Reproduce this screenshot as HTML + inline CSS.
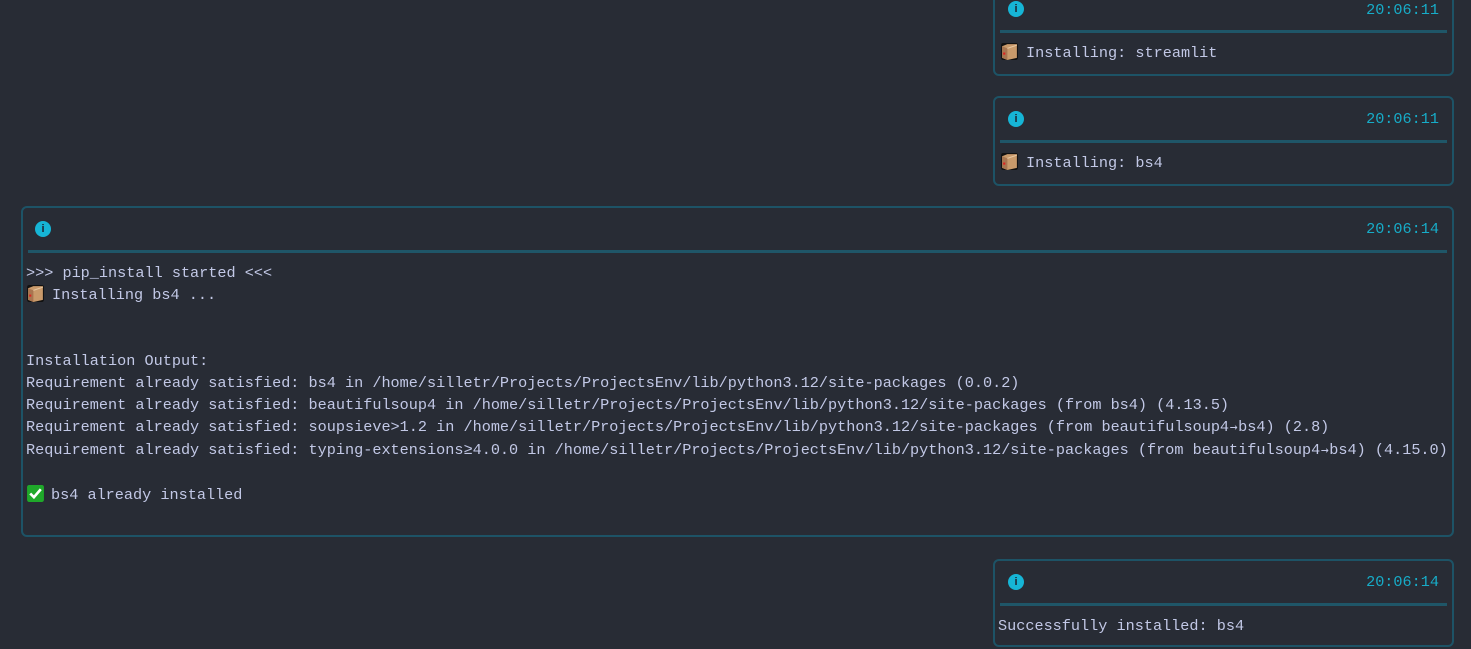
<!DOCTYPE html>
<html><head><meta charset="utf-8"><style>
body{margin:0;width:1471px;height:649px;background:#282c35;overflow:hidden;position:relative;font-family:"Liberation Mono","DejaVu Sans Mono",monospace;font-size:15.2px;color:#c2c8e6}
.card{position:absolute;border:2px solid #1d5366;border-radius:6px;box-sizing:border-box}
.ic{position:absolute;width:16px;height:16px;border-radius:50%;background:#16b5d6;color:#1c2230;font:bold 11px "Liberation Sans",sans-serif;text-align:center;line-height:16px}
.ts{position:absolute;color:#17acc8;font-size:15.2px}
.dv{position:absolute;height:3px;background:#1f5668}
.ln{position:absolute;white-space:pre;line-height:22px}
.box{display:inline-block;width:19px;height:19px;vertical-align:-4px;margin-right:7px}
.ar{display:inline-block;width:9.12px;text-align:center;font-family:"DejaVu Sans Mono",monospace;font-size:13px}
</style></head><body>
<svg width="0" height="0" style="position:absolute"><defs><symbol id="bx" viewBox="0 0 18 18"><rect x="1" y="1" width="16" height="16" rx="2" fill="#111"/><path d="M2 4 L7 2 L16 2 L16 15 L7 17 L2 15Z" fill="#c99a6b"/><path d="M2 4 L7 6 L7 17 L2 15Z" fill="#a87550"/><path d="M7 6 L16 3" stroke="#e6c6a0" stroke-width="1"/><rect x="3" y="10" width="2" height="2" fill="#d22"/></symbol></defs></svg>

<div class="card" style="left:993px;top:-13px;width:461px;height:89px">
<div class="ic" style="left:13px;top:12px">i</div>
<div class="ts" style="right:13px;top:12px">20:06:11</div>
<div class="dv" style="left:5px;right:5px;top:41px"></div>
<div class="ln" style="left:5px;top:53px"><svg class="box"><use href="#bx" width="19" height="19"/></svg>Installing: streamlit</div>
</div>

<div class="card" style="left:993px;top:96px;width:461px;height:90px">
<div class="ic" style="left:13px;top:13px">i</div>
<div class="ts" style="right:13px;top:12px">20:06:11</div>
<div class="dv" style="left:5px;right:5px;top:42px"></div>
<div class="ln" style="left:5px;top:54px"><svg class="box"><use href="#bx" width="19" height="19"/></svg>Installing: bs4</div>
</div>

<div class="card" style="left:21px;top:206px;width:1433px;height:331px">
<div class="ic" style="left:12px;top:13px">i</div>
<div class="ts" style="right:13px;top:12px">20:06:14</div>
<div class="dv" style="left:5px;right:5px;top:42px"></div>
<div class="ln" style="left:3px;top:54px">&gt;&gt;&gt; pip_install started &lt;&lt;&lt;
<svg class="box" style="margin-right:7px"><use href="#bx" width="19" height="19"/></svg>Installing bs4 ...


Installation Output:
Requirement already satisfied: bs4 in /home/silletr/Projects/ProjectsEnv/lib/python3.12/site-packages (0.0.2)
Requirement already satisfied: beautifulsoup4 in /home/silletr/Projects/ProjectsEnv/lib/python3.12/site-packages (from bs4) (4.13.5)
Requirement already satisfied: soupsieve&gt;1.2 in /home/silletr/Projects/ProjectsEnv/lib/python3.12/site-packages (from beautifulsoup4<span class="ar">→</span>bs4) (2.8)
Requirement already satisfied: typing-extensions≥4.0.0 in /home/silletr/Projects/ProjectsEnv/lib/python3.12/site-packages (from beautifulsoup4<span class="ar">→</span>bs4) (4.15.0)

<svg class="box" viewBox="0 0 18 18" style="margin-right:6px"><rect x="1" y="1" width="16" height="16" rx="2" fill="#1fa82a"/><path d="M4 9 L7.5 12.5 L14 5" stroke="#fff" stroke-width="2.5" fill="none"/></svg>bs4 already installed</div>
</div>

<div class="card" style="left:993px;top:559px;width:461px;height:88px">
<div class="ic" style="left:13px;top:13px">i</div>
<div class="ts" style="right:13px;top:12px">20:06:14</div>
<div class="dv" style="left:5px;right:5px;top:42px"></div>
<div class="ln" style="left:3px;top:54px">Successfully installed: bs4</div>
</div>
</body></html>
